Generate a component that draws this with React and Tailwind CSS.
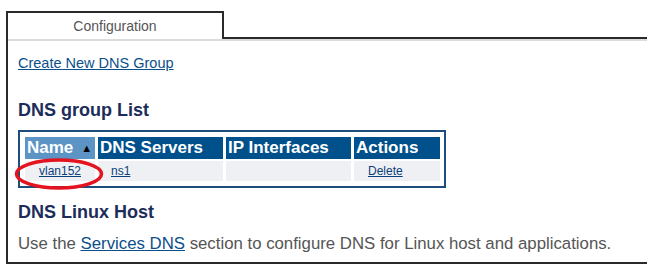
export default function App() {
  const font = { fontFamily: '"Liberation Sans", Arial, sans-serif' }

  return (
    <div className="relative w-[647px] h-[277px] bg-white overflow-hidden" style={font}>
      <div className="ml-[6px] mt-[11px] w-[641px] h-[253px] border-l-2 border-b-2 border-[#2a2a2a]">
        {/* tab strip */}
        <div className="flex">
          <div className="w-[216px] h-[28px] border-t-2 border-r-2 border-[#2a2a2a] flex items-center justify-center text-[14px] text-[#555]">
            Configuration
          </div>
          <div className="flex-1 border-b-2 border-[#2a2a2a]" />
        </div>
        <div className="h-[2px] bg-[#dcdcdc]" />

        <div className="pl-[10px] pt-[10px]">
          <a href="#" className="text-[14.5px] text-[#0b4f8a] underline leading-[18px]">
            Create New DNS Group
          </a>

          <h2 className="mt-[24px] text-[18px] font-bold text-[#1c2d5a] leading-[22px]">DNS group List</h2>

          <div className="relative mt-[9px] w-[428px] border-2 border-[#1d4d7c] pl-[5px] pr-[4px] py-[5px]">
            <div className="grid grid-cols-[70px_125px_125px_86px] gap-x-[3px] gap-y-[2px]">
              <div className="h-[22px] bg-[#5b94c5] text-white font-bold text-[17px] flex items-center pl-[2px]">
                Name <span className="ml-[8px] text-[11px] text-black">▲</span>
              </div>
              <div className="h-[22px] bg-[#00518b] text-white font-bold text-[17px] flex items-center pl-[2px]">
                DNS Servers
              </div>
              <div className="h-[22px] bg-[#00518b] text-white font-bold text-[17px] flex items-center pl-[2px]">
                IP Interfaces
              </div>
              <div className="h-[22px] bg-[#00518b] text-white font-bold text-[17px] flex items-center pl-[2px]">
                Actions
              </div>

              <div className="h-[20px] bg-[#eff0f4] flex items-center justify-center text-[12px]">
                <a href="#" className="text-[#0b3f7a] underline">vlan152</a>
              </div>
              <div className="h-[20px] bg-[#eff0f4] flex items-center pl-[13px] text-[12px]">
                <a href="#" className="text-[#0b3f7a] underline">ns1</a>
              </div>
              <div className="h-[20px] bg-[#eff0f4]" />
              <div className="h-[20px] bg-[#eff0f4] flex items-center pl-[14px] text-[12px]">
                <a href="#" className="text-[#0b3f7a] underline">Delete</a>
              </div>
            </div>

            <svg className="absolute left-[-6px] top-[26px]" width="90" height="32" viewBox="0 0 90 32">
              <ellipse cx="45" cy="16" rx="42.5" ry="14" fill="none" stroke="#e3141f" strokeWidth="3.5" />
            </svg>
          </div>

          <h2 className="mt-[13px] text-[18px] font-bold text-[#1c2d5a] leading-[22px]">DNS Linux Host</h2>

          <p className="mt-[11px] text-[16.8px] text-[#555] leading-[20px]">
            Use the{' '}
            <a href="#" className="text-[#0b4f8a] underline">Services DNS</a>{' '}
            section to configure DNS for Linux host and applications.
          </p>
        </div>
      </div>
    </div>
  )
}
